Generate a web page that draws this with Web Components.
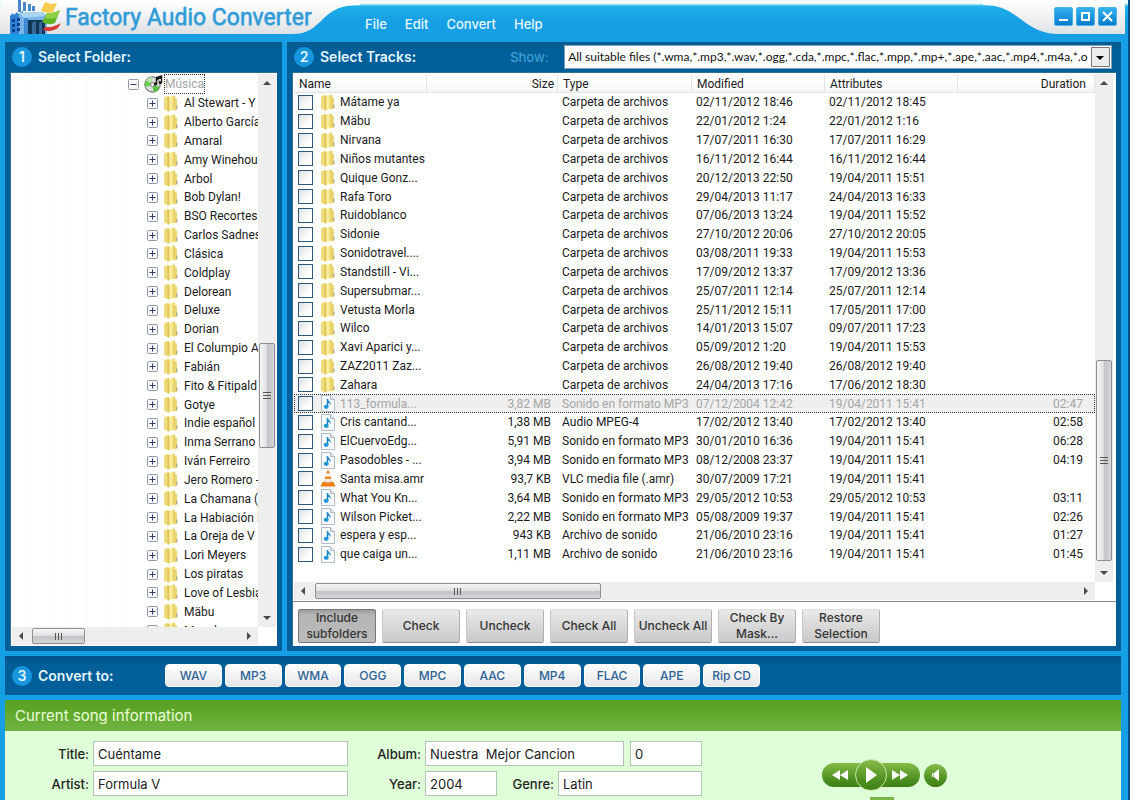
<!DOCTYPE html>
<html lang="en">
<head>
<meta charset="utf-8">
<title>Factory Audio Converter</title>
<style>
  html, body { margin: 0; }
  body { min-height: 100vh; display: flex; font-family: Inter, sans-serif; background: #169fe4; }
  audio-converter { flex: 1; min-width: 0; }
</style>
</head>
<body>
<audio-converter></audio-converter>
<script>
const LIST_FONT = 'Roboto, Tahoma, sans-serif';

const icons = {
  folder: `<svg width="16" height="17" viewBox="0 0 16 17" aria-hidden="true"><defs><linearGradient id="f"><stop stop-color="#e6cb58"/><stop offset=".4" stop-color="#fcf3a6"/><stop offset="1" stop-color="#e3c854"/></linearGradient></defs><path d="M1 2.500 4 1H6V16L1 15Z" fill="#f0dc7c"/><path d="M5 2 12 .5V14.500L5 16.500Z" fill="url(#f)"/><path d="M5 2V16.500" stroke="#cdb04a" stroke-width=".8"/><path d="M12 3 14 3.500V15L10 15.500 12 14.500Z" fill="#ecd778"/><path d="M13 10.500h1.500v3.500H13Z" fill="#b5ab84"/></svg>`,
  note: `<svg width="16" height="17" viewBox="0 0 16 17" aria-hidden="true"><path d="M1.500 .5H10.500L14.500 4.500V16.500H1.500Z" fill="#f8fbfe" stroke="#b3bbc6"/><path d="M10.500 .5V4.500H14.500" fill="#dfe5ec" stroke="#b3bbc6"/><path d="M7.500 4V11" stroke="#1a7fb8" stroke-width="1.500"/><path d="M7 3.500C8 6 11.500 6.500 10.500 10.500C10.300 8.500 9 8 7.500 7.500Z" fill="#1c8dcc"/><ellipse cx="6.200" cy="11.800" rx="2.500" ry="2.100" fill="#2098d6"/></svg>`,
  cone: `<svg width="16" height="17" viewBox="0 0 16 17" aria-hidden="true"><path d="M2.500 12H13.500L15.500 16.500H.5Z" fill="#ea7a14"/><path d="M7 .5H9L12.500 13.500Q8 15 3.500 13.500Z" fill="#f08a24"/><path d="M6.200 3.500H9.800L10.600 6.500H5.400Z" fill="#f5f5f5"/><path d="M4.700 9H11.300L12 11.500Q8 13 4 11.500Z" fill="#ececec"/></svg>`,
  disc: `<svg width="19" height="18" viewBox="0 0 19 18" aria-hidden="true"><circle cx="8.500" cy="9.500" r="7.700" fill="#d8dcd8" stroke="#5c5f5c"/><path d="M8.500 9.500 2 5.500A7.500 7.500 0 0 1 8 2Z" fill="#b9e3a8"/><path d="M8.500 9.500 15.500 12A7.500 7.500 0 0 1 9.500 17Z" fill="#58c23c"/><path d="M8.500 9.500 1.500 12A7.500 7.500 0 0 1 2 5.500Z" fill="#62cc4a"/><circle cx="8.500" cy="9.500" r="2" fill="#fff" stroke="#777"/><path d="M12.500 9V2.500L17.500 1V7.500" fill="none" stroke="#111" stroke-width="1.400"/><path d="M12.500 3 17.500 1.500V3.500L12.500 5Z" fill="#111"/><ellipse cx="11.500" cy="9" rx="1.700" ry="1.400" fill="#111"/><ellipse cx="16.400" cy="7.600" rx="1.700" ry="1.400" fill="#111"/></svg>`,
  logo: `<svg width="62" height="34" viewBox="0 0 62 34" aria-hidden="true"><path d="M18 0h3v12h-3zM23 2h3v9h-3zM28 4h3v7h-3zM32 6h3v5h-3z" fill="#4b86c6"/><path d="M10 16 13 13 14 15 17 12 18 14 23 11V34H10Z" fill="#2f80d2"/><path d="M19 13 42 12 47 16V34H19Z" fill="#78b4e8"/><path d="M19 13 42 12 45 16 24 18Z" fill="#a9d5f4"/><path d="M28 20H45V34H28Z" fill="#133557"/><path d="M24 18H28V34H24Z" fill="#3f8bd2"/><path d="M12 19h3v3h-3zM12 24h3v3h-3zM12 29h3v3h-3zM17 18h3v3h-3zM17 23h3v3h-3zM17 28h3v3h-3z" fill="#0d4390"/><path d="M32 23 36 21V34H32ZM39 23 42 21V34H39Z" fill="#356998"/><path d="M45 2Q51 5 57 3L53 12Q47 14 41 11Z" fill="#fbcb50"/><path d="M47 13Q54 14 60 10L55 23Q49 26 42 22Z" fill="#62b82a"/><path d="M47 13Q54 14 60 10L57 17Q51 20 45 18Z" fill="#8fd044"/><path d="M45 27Q53 28 61 23L58 28Q51 33 43 30Z" fill="#d63a34"/></svg>`
};

function define(name, render) {
  customElements.define(name, class extends HTMLElement {
    connectedCallback() {
      if (this.shadowRoot) return;
      const t = document.createElement('template');
      t.innerHTML = render(this);
      this.attachShadow({ mode: 'open' }).append(t.content.cloneNode(true));
    }
  });
}

define('scroll-bar', host => {
  const [before, thumb, rest] = host.getAttribute('track').split(' ');
  const y = host.getAttribute('axis') === 'y';
  const arrow = d => `<svg width="8" height="8" viewBox="0 0 8 8" aria-hidden="true"><path d="${d}" fill="#4a4a4a"/></svg>`;
  return `<style>
    :host { display: flex; flex-direction: ${y ? 'column' : 'row'}; background: #eeeeee; }
    span { flex: 0 0 18px; display: flex; align-items: center; justify-content: center; }
    i { flex: ${before} 0 0; } i + b + i { flex-grow: ${rest}; }
    b { flex: ${thumb} 0 0; box-sizing: border-box; margin: ${y ? '0 1px' : '1px 0'}; border: 1px solid #8f8f8f; border-radius: 2px;
        display: flex; align-items: center; justify-content: center;
        background: linear-gradient(${y ? 'to right' : 'to bottom'}, #f6f6f6, #e2e2e3 45%, #c3c4c8 55%, #d6d6d8); }
  </style>
  <span>${arrow(y ? 'M0 6 4 2 8 6Z' : 'M6 0 2 4 6 8Z')}</span><i></i>
  <b><svg width="9" height="9" viewBox="0 0 9 9" aria-hidden="true"><path d="${y ? 'M0 1.500H8M0 4.500H8M0 7.500H8' : 'M1.500 1V8M4.500 1V8M7.500 1V8'}" stroke="#555"/></svg></b><i></i>
  <span>${arrow(y ? 'M0 2 4 6 8 2Z' : 'M2 0 6 4 2 8Z')}</span>`;
});

define('title-bar', () => `<style>
    :host { display: flex; justify-content: space-between; height: 42px; color: #e6f8ff;
      background: linear-gradient(#f2fcff 0 4px, #8fdcf5 4px 5px, #22b0ea 6px, #169fe4 20px, #169fe4); }
    .brand { flex: 0 0 360px; display: flex; box-sizing: border-box; height: 36px;
      background: linear-gradient(#ffffff, #f4f4f4 14px, #dcdfe2);
      clip-path: path('M8 0H360V5C342 5 334 9 325 17C314 28 308 34 292 34H0V8Q0 0 8 0Z'); }
    .brand svg { flex: none; }
    h1 { margin: 0 0 0 3px; font: 400 23px/35px Roboto, sans-serif; color: #2f9bd8; -webkit-text-stroke: 0.4px #2f9bd8; text-shadow: 0 1px 1px #9cc8e2; white-space: nowrap; }
    nav { flex: 1; display: flex; gap: 18px; padding: 14px 0 0 5px; font-size: 13px; line-height: 20px; font-weight: 500; }
    a { color: inherit; text-decoration: none; }
    .win { flex: 0 0 145px; display: flex; gap: 3px; box-sizing: border-box; height: 34px; padding: 7px 0 0 71px;
      background: linear-gradient(#ffffff, #f4f4f4 14px, #dfe2e5);
      clip-path: path('M0 0H135Q142 0 142 8V34H78C58 34 50 28 36 18C24 9 16 5 0 5Z'); }
    button { width: 19px; height: 19px; padding: 0; border: 1px solid #49b4e8; border-radius: 2px; background: linear-gradient(#32b2ee, #0b7ccc); display: grid; place-items: center; }
  </style>
  <div class="brand">${icons.logo}<h1>Factory Audio Converter</h1></div>
  <nav aria-label="Menu"><a href="#file">File</a><a href="#edit">Edit</a><a href="#convert">Convert</a><a href="#help">Help</a></nav>
  <div class="win">
    <button aria-label="Minimize"><svg width="11" height="11" viewBox="0 0 11 11"><path d="M1 9H10" stroke="#fff" stroke-width="2"/></svg></button>
    <button aria-label="Maximize"><svg width="11" height="11" viewBox="0 0 11 11"><path d="M2 2H9V9H2Z" fill="none" stroke="#fff" stroke-width="2"/></svg></button>
    <button aria-label="Close"><svg width="11" height="11" viewBox="0 0 11 11"><path d="M1 1 10 10M10 1 1 10" stroke="#fff" stroke-width="2"/></svg></button>
  </div>`);

define('step-heading', host => `<style>
    :host { display: flex; align-items: center; gap: 6px; color: #e2f5ff; }
    b { flex: none; width: 20px; height: 20px; border-radius: 50%; background: #1796dd; text-align: center; font-size: 14px; line-height: 20px; font-weight: 600; }
    h2 { margin: 0; font-size: 14px; line-height: 20px; font-weight: 600; white-space: nowrap; }
  </style><b>${host.getAttribute('step')}</b><h2><slot></slot></h2>`);

define('step-panel', host => `<style>
    :host { display: flex; flex-direction: column; min-width: 0; padding: 0 5px 5px; background: linear-gradient(#0b5c90, #005f98 8px); }
    header { display: flex; align-items: center; height: 30px; padding-left: 2px; }
    ::slotted([slot=tools]) { flex: 1; min-width: 0; }
    .box { flex: 1; display: flex; flex-direction: column; border: 1px solid #31708f; border-width: 1px 0 0 1px; background: #fff; }
    ::slotted(:not([slot])) { flex: 1; min-height: 0; }
  </style>
  <header><step-heading step="${host.getAttribute('step')}">${host.getAttribute('heading')}</step-heading><slot name="tools"></slot></header>
  <div class="box"><slot></slot></div>`);

const folders = ['Al Stewart - Y', 'Alberto García', 'Amaral', 'Amy Winehou', 'Arbol', 'Bob Dylan!', 'BSO Recortes', 'Carlos Sadnes', 'Clásica', 'Coldplay', 'Delorean', 'Deluxe', 'Dorian', 'El Columpio As', 'Fabián', 'Fito & Fitipald', 'Gotye', 'Indie español', 'Inma Serrano', 'Iván Ferreiro', 'Jero Romero -', 'La Chamana (', 'La Habiación R', 'La Oreja de V', 'Lori Meyers', 'Los piratas', 'Love of Lesbia', 'Mäbu', 'Manel'];

define('folder-tree', () => {
  const box = d => `<svg width="11" height="11" viewBox="0 0 11 11" aria-hidden="true"><rect x=".5" y=".5" width="10" height="10" rx="1" fill="#f8f8fa" stroke="#9298a8"/><path d="${d}" stroke="#30406a"/></svg>`;
  return `<style>
    :host { display: grid; grid-template: minmax(0, 1fr) 18px / minmax(0, 1fr) 18px; padding: 1px; contain: size; font: 12px/18px ${LIST_FONT}; color: #1a1a1a; }
    .view { overflow: hidden; padding-top: 1px; background: repeating-linear-gradient(to right, #fff 0 18px, #fafafa 18px 19px) 0 0 / 114px 100% no-repeat; }
    ul { margin: 0; padding: 0; list-style: none; height: 565px; display: grid; grid-auto-rows: 1fr; }
    li { display: flex; align-items: center; padding-left: 135px; white-space: nowrap; }
    li.root { padding-left: 116px; }
    svg { flex: none; } svg + svg { margin-left: 5px; }
    span { margin-left: 5px; }
    .root span { margin-left: 2px; color: #a4a4a4; outline: 1px dotted #333; }
  </style>
  <div class="view"><ul role="tree" aria-label="Folders"><li class="root" role="treeitem">${box('M2.500 5.500H8.500')}${icons.disc}<span>Música</span></li>
  ${folders.map(f => `<li role="treeitem">${box('M2.500 5.500H8.500M5.500 2.500V8.500')}${icons.folder}<span>${f.replace('&', '&amp;')}</span></li>`).join('')}</ul></div>
  <scroll-bar axis="y" track="252 103 162"></scroll-bar>
  <scroll-bar axis="x" track="2 51 156"></scroll-bar>`;
});

const D = 'Carpeta de archivos', M = 'Sonido en formato MP3', A = 'Archivo de sonido';
const tracks = [
  ['Mátame ya', '', D, '02/11/2012 18:46', '02/11/2012 18:45'],
  ['Mäbu', '', D, '22/01/2012 1:24', '22/01/2012 1:16'],
  ['Nirvana', '', D, '17/07/2011 16:30', '17/07/2011 16:29'],
  ['Niños mutantes', '', D, '16/11/2012 16:44', '16/11/2012 16:44'],
  ['Quique Gonz...', '', D, '20/12/2013 22:50', '19/04/2011 15:51'],
  ['Rafa Toro', '', D, '29/04/2013 11:17', '24/04/2013 16:33'],
  ['Ruidoblanco', '', D, '07/06/2013 13:24', '19/04/2011 15:52'],
  ['Sidonie', '', D, '27/10/2012 20:06', '27/10/2012 20:05'],
  ['Sonidotravel....', '', D, '03/08/2011 19:33', '19/04/2011 15:53'],
  ['Standstill - Vi...', '', D, '17/09/2012 13:37', '17/09/2012 13:36'],
  ['Supersubmar...', '', D, '25/07/2011 12:14', '25/07/2011 12:14'],
  ['Vetusta Morla', '', D, '25/11/2012 15:11', '17/05/2011 17:00'],
  ['Wilco', '', D, '14/01/2013 15:07', '09/07/2011 17:23'],
  ['Xavi Aparici y...', '', D, '05/09/2012 1:20', '19/04/2011 15:53'],
  ['ZAZ2011 Zaz...', '', D, '26/08/2012 19:40', '26/08/2012 19:40'],
  ['Zahara', '', D, '24/04/2013 17:16', '17/06/2012 18:30'],
  ['113_formula...', '3,82 MB', M, '07/12/2004 12:42', '19/04/2011 15:41', '02:47'],
  ['Cris cantand...', '1,38 MB', 'Audio MPEG-4', '17/02/2012 13:40', '17/02/2012 13:40', '02:58'],
  ['ElCuervoEdg...', '5,91 MB', M, '30/01/2010 16:36', '19/04/2011 15:41', '06:28'],
  ['Pasodobles - ...', '3,94 MB', M, '08/12/2008 23:37', '19/04/2011 15:41', '04:19'],
  ['Santa misa.amr', '93,7 KB', 'VLC media file (.amr)', '30/07/2009 17:21', '19/04/2011 15:41'],
  ['What You Kn...', '3,64 MB', M, '29/05/2012 10:53', '29/05/2012 10:53', '03:11'],
  ['Wilson Picket...', '2,22 MB', M, '05/08/2009 19:37', '19/04/2011 15:41', '02:26'],
  ['espera y esp...', '943 KB', A, '21/06/2010 23:16', '19/04/2011 15:41', '01:27'],
  ['que caiga un...', '1,11 MB', A, '21/06/2010 23:16', '19/04/2011 15:41', '01:45']
];

define('track-list', () => `<style>
    :host { display: flex; flex-direction: column; font: 12px/18px ${LIST_FONT}; color: #1a1a1a; }
    .pane { flex: 1; display: grid; grid-template: 1fr 18px / minmax(0, 1fr) 18px; padding: 1px 3px 1px 1px; border-bottom: 1px solid #8c8c8c; }
    .view { overflow: hidden; padding-bottom: 18px; }
    table { width: 100%; height: 490px; table-layout: fixed; border-collapse: collapse; }
    col.n, col.m { width: 133px; } col.s { width: 131px; } col.t { width: 134px; }
    th, td { padding: 0 0 0 4px; text-align: left; font-weight: 400; white-space: nowrap; }
    th { height: 19px; padding-left: 5px; box-sizing: border-box; background: linear-gradient(#fff 40%, #f2f4f6); box-shadow: inset -1px -1px #e2e5e8; }
    td:first-child { padding-left: 3px; }
    .r { text-align: right; padding-right: 7px; } th.r { padding-right: 4px; }
    td:last-child { padding-right: 12px; } th:last-child { padding-right: 9px; }
    label { display: flex; align-items: center; padding-left: 1px; height: 18px; }
    input { appearance: none; flex: none; margin: 0 7px 0 0; width: 15px; height: 15px; border: 1px solid #2f5878; background: linear-gradient(135deg, #dcdfe2, #fff 70%); }
    svg { flex: none; margin-right: 4px; }
    .sel { background: #efefef; color: #a6a6a6; outline: 1px dotted #333; outline-offset: -1px; }
    .buttons { display: flex; gap: 6px; padding: 7px 5px 3px; }
    .buttons button { flex: 0 0 78px; height: 34px; padding: 0; border: 1px solid; border-color: #dedede #b0b0b0 #8e8e8e #c8c8c8; border-radius: 2px; background: linear-gradient(#e9e9e9, #c9c9c9);
      font: 500 12px/16px Inter, sans-serif; color: #333; white-space: nowrap; }
    .buttons button.on { border-color: #777; background: linear-gradient(#9b9b9b, #b5b5b5 5px, #bcbcbc); }
  </style>
  <div class="pane">
    <div class="view"><table>
      <colgroup><col class="n"><col class="s"><col class="t"><col class="m"><col class="m"><col></colgroup>
      <thead><tr><th>Name</th><th class="r">Size</th><th>Type</th><th>Modified</th><th>Attributes</th><th class="r">Duration</th></tr></thead>
      <tbody>${tracks.map(([n, s, t, m, a, d = ''], i) => `<tr${i === 16 ? ' class="sel"' : ''}><td><label><input type="checkbox">${t === D ? icons.folder : t.startsWith('VLC') ? icons.cone : icons.note}${n}</label></td><td class="r">${s}</td><td>${t}</td><td>${m}</td><td>${a}</td><td class="r">${d}</td></tr>`).join('')}</tbody>
    </table></div>
    <scroll-bar axis="y" track="269 200 3"></scroll-bar>
    <scroll-bar axis="x" track="3 285 478"></scroll-bar>
  </div>
  <div class="buttons"><button class="on" aria-pressed="true">Include<br>subfolders</button><button>Check</button><button>Uncheck</button><button>Check All</button><button>Uncheck All</button><button>Check By<br>Mask...</button><button>Restore<br>Selection</button></div>`);

define('file-filter', () => `<style>
    :host { display: flex; align-items: center; padding: 0 4px 0 94px; }
    label { flex: 0 0 54px; font-size: 13px; line-height: 20px; font-weight: 500; color: #3d9fd6; }
    .field { flex: 1; min-width: 0; display: flex; }
    select { appearance: none; flex: 1; min-width: 0; height: 24px; padding: 0 20px 0 3px; border: 1px solid #7ba3bd; border-radius: 0; color: #111; font: 12px/20px Lato, sans-serif;
      background: url("data:image/svg+xml,%3Csvg xmlns='http://www.w3.org/2000/svg' width='19' height='20'%3E%3Cpath d='M.5.500H18.500V19.500H.5Z' fill='%23ececec' stroke='%23777'/%3E%3Cpath d='M5 9H13L9 13Z'/%3E%3C/svg%3E") no-repeat right 1px center, #fff; }
  </style>
  <label for="filter">Show:</label>
  <div class="field"><select id="filter"><option>All suitable files (*.wma,*.mp3,*.wav,*.ogg,*.cda,*.mpc,*.flac,*.mpp,*.mp+,*.ape,*.aac,*.mp4,*.m4a,*.o</option></select></div>`);

define('convert-bar', () => `<style>
    :host { display: flex; align-items: center; height: 39px; padding-left: 7px; background: linear-gradient(#02508a, #005f98 8px); }
    step-heading { flex: 0 0 153px; }
    div { flex: 0 1 595px; display: grid; grid-template-columns: repeat(10, 1fr); gap: 3px; }
    button { height: 23px; padding: 0; border: 1px solid #fff; border-radius: 4px; background: linear-gradient(#fff, #e4e6e8); color: #2d6296; font: 500 12px/20px Inter, sans-serif; white-space: nowrap; }
  </style>
  <step-heading step="3">Convert to:</step-heading>
  <div>${['WAV', 'MP3', 'WMA', 'OGG', 'MPC', 'AAC', 'MP4', 'FLAC', 'APE', 'Rip CD'].map(f => `<button>${f}</button>`).join('')}</div>`);

define('player-controls', () => `<style>
    :host { display: grid; justify-items: start; align-content: start; box-sizing: border-box; }
    .row { display: flex; align-items: center; }
    button { padding: 0; border: 0; height: 24px; display: grid; place-items: center; background: linear-gradient(#86ba48, #4c8f1f 70%, #3f8018); }
    .back { width: 41px; margin-right: -8px; padding-right: 6px; border-radius: 12px 0 0 12px; }
    .play { width: 32px; height: 32px; border: 1px solid #c4e4a0; border-radius: 50%; z-index: 1; }
    .next { width: 45px; margin-left: -12px; padding: 0 4px 0 8px; border-radius: 0 12px 12px 0; }
    .mute { width: 23px; height: 23px; border-radius: 50%; margin-left: 4px; }
    hr { width: 24px; height: 3px; margin: 6px 0 0 48px; border: 0; background: #7ab648; }
  </style>
  <div class="row">
    <button class="back" aria-label="Previous"><svg width="16" height="10" viewBox="0 0 16 10"><path d="M8 0V10L0 5ZM16 0V10L8 5Z" fill="#fff"/></svg></button>
    <button class="play" aria-label="Play"><svg width="12" height="16" viewBox="0 0 12 16"><path d="M1 0 12 8 1 16Z" fill="#fff"/></svg></button>
    <button class="next" aria-label="Next"><svg width="16" height="10" viewBox="0 0 16 10"><path d="M0 0V10L8 5ZM8 0V10L16 5Z" fill="#fff"/></svg></button>
    <button class="mute" aria-label="Mute"><svg width="10" height="12" viewBox="0 0 10 12"><path d="M1 4H2.500V8H1ZM3 4 8 0V12L3 8Z" fill="#fff"/></svg></button>
  </div><hr>`);

define('song-info', () => `<style>
    :host { display: flex; flex-direction: column; background: #dfffd8; }
    h2 { margin: 0; padding: 0 10px; font-size: 15px; line-height: 31px; font-weight: 400; color: #eaffd8; background: linear-gradient(#57a022, #5ea62a 10px, #72b343); }
    form { display: grid; grid-template-columns: 84px 255px 69px 277px minmax(0, 1fr); gap: 5px 4px; align-items: center; padding: 10px 0 4px; }
    label { text-align: right; font-size: 13px; line-height: 20px; font-weight: 500; color: #222; }
    input { box-sizing: border-box; width: 100%; min-width: 0; height: 25px; padding: 0 4px; border: 1px solid #b4c4b4; background: #fff; font: 13px/20px Inter, sans-serif; color: #222; white-space: pre; }
    .pair { display: grid; grid-template-columns: 199px 1fr; gap: 6px; }
    .trio { display: grid; grid-template-columns: 72px 53px 1fr; gap: 4px; align-items: center; }
    player-controls { grid-column: 5; grid-row: 1 / 3; align-self: start; padding: 18px 0 0 116px; height: 55px; }
  </style>
  <h2>Current song information</h2>
  <form>
    <label for="title">Title:</label><input id="title" value="Cuéntame">
    <label for="album">Album:</label><div class="pair"><input id="album" value="Nuestra  Mejor Cancion"><input aria-label="Track number" value="0"></div>
    <label for="artist">Artist:</label><input id="artist" value="Formula V">
    <label for="year">Year:</label><div class="trio"><input id="year" value="2004"><label for="genre">Genre:</label><input id="genre" value="Latin"></div>
    <player-controls></player-controls>
  </form>`);

define('audio-converter', () => `<style>
    :host { display: flex; flex-direction: column; overflow: hidden; border-right: 2px solid #07508c; box-sizing: border-box; }
    main { flex: 1; display: flex; flex-direction: column; gap: 5px; padding: 0 7px 0 5px; }
    .work { display: grid; grid-template-columns: 277px minmax(0, 1fr); gap: 5px; }
    song-info { flex: 1; }
  </style>
  <title-bar></title-bar>
  <main>
    <div class="work">
      <step-panel step="1" heading="Select Folder:"><folder-tree></folder-tree></step-panel>
      <step-panel step="2" heading="Select Tracks:"><file-filter slot="tools"></file-filter><track-list></track-list></step-panel>
    </div>
    <convert-bar></convert-bar>
    <song-info></song-info>
  </main>`);
</script>
</body>
</html>
